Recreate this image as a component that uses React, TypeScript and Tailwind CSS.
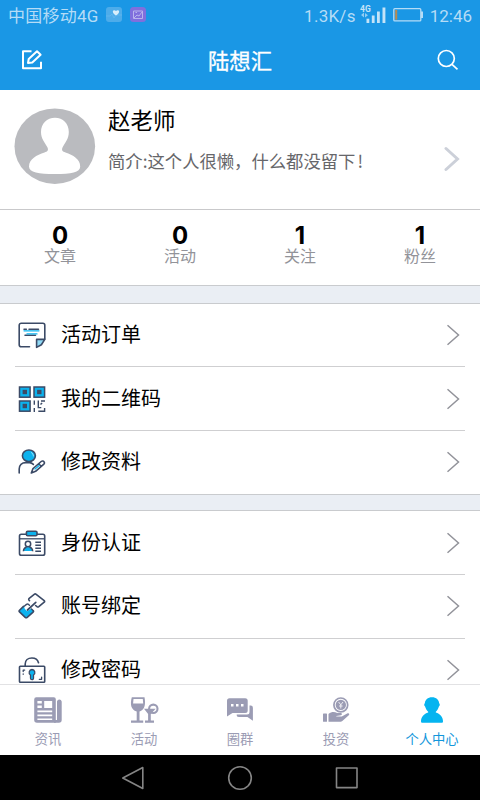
import React from "react";

const NAVY = "#3b4a66";
const CYAN = "#0cb2ee";

function OrderIcon() {
  return (
    <svg width="28" height="28" viewBox="0 0 28 28" fill="none" stroke={NAVY} strokeWidth="1.6" strokeLinecap="round" strokeLinejoin="round">
      <path d="M11.5 25.8H3.2a2 2 0 0 1-2-2V4.2a2 2 0 0 1 2-2h21.6a2 2 0 0 1 2 2V18" />
      <path d="M18.6 18.4h8.2l-3.4 5.4-4.8 2.6z" fill="#8fd9f5" />
      <path d="M6 8.3h2.4M11 8.3h9.5M7 14.2h10.5" strokeWidth="1.5" />
      <path d="M6 9.8h15M9 12.9h10" stroke={CYAN} strokeWidth="1.3" />
    </svg>
  );
}

function QrIcon() {
  return (
    <svg width="28" height="28" viewBox="0 0 28 28" fill="none" stroke={NAVY} strokeWidth="1.5">
      <rect x="1.5" y="2" width="10.6" height="10.2" fill={CYAN} />
      <rect x="16" y="2" width="10.6" height="10.2" fill={CYAN} />
      <rect x="1.5" y="16" width="10.6" height="10.2" fill={CYAN} />
      <g fill={NAVY} stroke="none">
        <rect x="4.6" y="4.8" width="4.4" height="4.4" />
        <rect x="19.1" y="4.8" width="4.4" height="4.4" />
        <rect x="4.6" y="18.8" width="4.4" height="4.4" />
      </g>
      <path d="M16.3 15.4v4.4M16.3 23v4M20.3 15.4v7.2h3M20.3 26.3h6.3v-3.2M22.5 19.5l1.6-1.6M23 16h4" strokeWidth="1.4" />
    </svg>
  );
}

function ProfileIcon() {
  return (
    <svg width="28" height="28" viewBox="0 0 28 28" fill="none" stroke={NAVY} strokeWidth="1.6" strokeLinecap="round" strokeLinejoin="round">
      <ellipse cx="10.9" cy="7.8" rx="6.5" ry="5.8" fill={CYAN} />
      <path d="M13.5 4.6c1.2.8 1.9 2 1.9 3.4" stroke="#a5e4fa" strokeWidth="1" />
      <path d="M1.2 25v-4c0-3.700 2.700-6.400 6.600-6.400h3.800c1.800 0 2.800.8 3.800 1.800" />
      <path d="M13.300 25l1.700-4.400 8.200-7.100c1-.8 2.200-.6 2.800.3.600.8.500 1.800-.4 2.600l-8 6.900zM20.800 15.800l2.400 2.700" />
      <path d="M17 21l4.200-3.600" stroke={CYAN} strokeWidth="1.300" />
    </svg>
  );
}

function IdCardIcon() {
  return (
    <svg width="28" height="28" viewBox="0 0 28 28" fill="none" stroke={NAVY} strokeWidth="1.6" strokeLinejoin="round">
      <rect x="1.5" y="5.2" width="25.2" height="21" rx="1.8" />
      <path d="M1.5 9.8h25.2" strokeWidth="1.3" />
      <rect x="8.4" y="2.2" width="10.6" height="4.6" rx="1.2" fill={CYAN} />
      <path d="M6 22c.2-2.6 1.4-4.1 4-4.1s3.900 1.500 4.100 4.100z" fill={CYAN} stroke="none" />
      <circle cx="10" cy="15" r="2.7" fill="#fff" strokeWidth="1.5" />
      <path d="M5.400 22.300c.2-2.600 1.500-3.900 3.300-4.300M11.300 18c1.900.4 3.200 1.700 3.400 4.300" strokeWidth="1.5" />
      <path d="M17.300 13.200H23M17.300 16.200H23M17.300 19.200H23M17.300 22.200H23" strokeWidth="1.400" />
    </svg>
  );
}

function LinkIcon() {
  return (
    <svg width="28" height="28" viewBox="0 0 28 28" fill="none" stroke={NAVY} strokeWidth="1.6" strokeLinecap="round" strokeLinejoin="round">
      <path d="M6 13.800L1.500 18.300q-.8.8 0 1.600l5.700 5.500q1 .8 2 0l6-5.300q.9-.9 0-1.700l-2-1.800-4 2.600-2.500-2.500z" fill={CYAN} stroke="none" />
      <path d="M5.500 14.400l-4 3.900q-.8.8 0 1.600l5.700 5.500q1 .8 2 0l5.900-5.200q.8-.8.200-1.400" />
      <path d="M11.500 8.700l-.6-.8q-.5-.8.300-1.600l5-4q1-.8 2 0l8 6.300q.8.800 0 1.600l-5.400 4.500q-.9.700-1.800 0l-1.400-1.200" />
      <path d="M9.500 18l8.300-7.600" strokeWidth="1.700" />
      <path d="M6.500 14l2-1.600q1-.8 2 0l1 .9M13.500 17l1.600 1.500" strokeWidth="1.400" />
    </svg>
  );
}

function LockIcon() {
  return (
    <svg width="28" height="28" viewBox="0 0 28 28" fill="none" stroke={NAVY} strokeWidth="1.6" strokeLinecap="round" strokeLinejoin="round">
      <path d="M7.200 10.200V8c0-3.500 2.800-6 6.700-6 3.500 0 5.900 2 6.600 4.700" />
      <rect x="1.500" y="10.200" width="25.200" height="16" rx=".8" />
      <path d="M14 13.500a3 3 0 0 1 1.500 5.500v3.200a1.500 1.500 0 0 1-3 0V19a3 3 0 0 1 1.500-5.500z" fill={CYAN} strokeWidth="1.300" />
      <path d="M5.200 15.600v-1.500h1.500M5.200 18v.3M21.300 23.300h2.300v-2.200" strokeWidth="1.300" />
    </svg>
  );
}

function Row({ icon, label, last = false }: { icon: React.ReactNode; label: string; last?: boolean }) {
  return (
    <div className="h-[63.700px] px-[15px]">
      <div className={`flex h-full items-center pl-[3px] pr-[5px] ${last ? "pb-[1px]" : "border-b border-[#cfcfd1]"}`}>
        {icon}
        <span className="ml-[15px] flex-1 pb-[2px] text-[20px] leading-[28px] text-black">{label}</span>
        <svg width="14" height="22" viewBox="0 0 14 22" fill="none" stroke="#92939a" strokeWidth="1.500">
          <path d="M1.500 1.200L12.500 11L1.500 20.800" />
        </svg>
      </div>
    </div>
  );
}

function Stat({ value, label }: { value: string; label: string }) {
  return (
    <div className="flex flex-1 flex-col items-center pt-[14px]">
      <span className="font-[Inter] text-[24px] font-bold leading-[23px] text-black">{value}</span>
      <span className="text-[16px] leading-[16px] text-[#929399]">{label}</span>
    </div>
  );
}

function Tab({ icon, label, active = false }: { icon: React.ReactNode; label: string; active?: boolean }) {
  return (
    <div className={`flex flex-1 flex-col items-center pt-[11px] ${active ? "text-[#1296db]" : "text-[#9b9cb4]"}`}>
      {icon}
      <span className="mt-[5px] text-[13.300px] leading-[20px]">{label}</span>
    </div>
  );
}

function NewsIcon() {
  return (
    <svg width="30" height="28" viewBox="0 0 30 28">
      <path fill="#9b9cb4" fillRule="evenodd" d="M3.500 1.300h17.300a2 2 0 0 1 2 2v23.500H4a2.800 2.800 0 0 1-2.800-2.800V3.500a2.200 2.200 0 0 1 2.300-2.200zM4.400 5v2.500h4.400V5zm0 4.500V12h4.400V9.500zM11.200 5v7h8V5zM4.400 14.500v1.700h14.800v-1.700zm0 4v1.700h14.800v-1.700zm0 4V24h14.800v-1.500z" />
      <path fill="#9b9cb4" d="M24 5.500a2.400 2.400 0 0 1 4.700 0V24a2.800 2.800 0 0 1-2.800 2.800H21V24h3z" />
    </svg>
  );
}

function DrinkIcon() {
  return (
    <svg width="30" height="28" viewBox="0 0 30 28" fill="#9b9cb4">
      <path fillRule="evenodd" d="M2.800 1.300h12.700c1 5.500.8 10.300-2.300 12.800-1 .9-1.900 1.200-2.700 1.300v9.200h3.700v2.200H2v-2.200h5.700v-9.200C1.900 14 .9 8.300 2.800 1.300zM4.500 3l-.4 4.500h10.100L13.800 3z" />
      <path d="M15 12.800h11.700l-4.900 5.200v6.600H25v2.200h-9v-2.200h3.100v-6.600z" />
      <circle cx="24.300" cy="12.800" r="4.200" fill="none" stroke="#9b9cb4" strokeWidth="2.100" />
    </svg>
  );
}

function ChatIcon() {
  return (
    <svg width="30" height="28" viewBox="0 0 30 28" fill="#9b9cb4">
      <path fillRule="evenodd" d="M4.500 2.200h15.700a2.500 2.500 0 0 1 2.500 2.500v9.800a2.500 2.500 0 0 1-2.500 2.500H7.500L2 20.500V4.700a2.500 2.500 0 0 1 2.500-2.500zM6 8v2.500h2.500V8zm5 0v2.500h2.500V8zm5 0v2.500h2.500V8z" />
      <path d="M24.500 9.500h1.200a2.200 2.200 0 0 1 2.200 2.200v13L22.500 21H14a2.300 2.300 0 0 1-2.300-2.500h10.300a2.500 2.500 0 0 0 2.500-2.500z" />
    </svg>
  );
}

function InvestIcon() {
  return (
    <svg width="30" height="28" viewBox="0 0 30 28" fill="#9b9cb4">
      <circle cx="19.800" cy="8.900" r="6.900" fill="none" stroke="#9b9cb4" strokeWidth="1.700" />
      <circle cx="19.800" cy="8.900" r="5.200" />
      <path d="M17.600 6l2.200 2.800L22 6M19.800 8.500v4M18 10h3.600" fill="none" stroke="#fff" strokeWidth=".8" />
      <rect x="2" y="17.500" width="4" height="8.300" rx=".6" />
      <path d="M7.500 18c3-2.400 5.800-2.400 8.700-1h3.500c1.500 0 1.800 1.900.2 2.300l-4.600.6v.6h5.500l5.400-3.100c1.600-.8 2.800.5 1.600 1.800l-6.200 5.600c-.8.700-1.500 1-2.600 1H7.500z" />
    </svg>
  );
}

function UserIcon() {
  return (
    <svg width="30" height="28" viewBox="0 0 30 28" fill="#04b4f0">
      <path d="M15 1.200c4.200 0 7.100 2.700 7.100 6 .9.400 1 2.500-.2 3.300-.6 2.300-1.700 4-3.100 5.200v.8c4.200 1.200 7.200 4.500 7.200 8.700 0 1.200-.5 1.600-1.500 1.600h-19c-1 0-1.500-.4-1.500-1.600 0-4.200 3-7.500 7.200-8.700v-.8c-1.400-1.200-2.500-2.900-3.100-5.200-1.200-.8-1.100-2.900-.2-3.300 0-3.300 2.900-6 7.100-6z" />
    </svg>
  );
}

export default function App() {
  return (
    <div className="flex h-[800px] w-[480px] flex-col overflow-hidden bg-white font-['Noto_Sans_CJK_SC',sans-serif]">
      <header className="h-[90px] shrink-0 bg-[#1a97e5]">
        <div className="flex h-[30px] items-center pl-[8px] pr-[8px] font-[Roboto,'Noto_Sans_CJK_SC',sans-serif] text-[17px] leading-[30px] text-[#b5dcf6]">
          <span className="w-[91px] whitespace-nowrap pt-[1px] tracking-[0.250px]">中国移动4G</span>
          <svg className="ml-[7px]" width="16" height="16" viewBox="0 0 16 16">
            <rect width="16" height="15" rx="3" fill="#4dacea" />
            <path d="M0 9h4l2-2 2 4 2-3h6" fill="none" stroke="#66b7ed" strokeWidth=".8" />
            <path d="M10 8.500C4 4.500 8 1.700 10 4.100 12 1.700 16 4.500 10 8.500z" fill="#d8eefb" />
          </svg>
          <svg className="ml-[8px]" width="16" height="16" viewBox="0 0 16 16">
            <rect width="16" height="15" rx="3.500" fill="#806fdd" />
            <path d="M3.500 4h9v7.500h-9zM4 11l3-3 2 1 3-4M5.500 5.500h1.500" fill="none" stroke="#b8b4ed" />
          </svg>
          <span className="ml-auto whitespace-nowrap pt-[1px] tracking-[0.250px]">1.3K/s</span>
          <svg className="ml-[4px]" width="26" height="20" viewBox="0 0 26 20" fill="#c4e3f8">
            <text x="0" y="7" fontSize="8.500" fontWeight="bold" fontFamily="Roboto">4G</text>
            <path d="M1 10l3-2.500v5zM5 8l3 2.200-3 2.300z" opacity=".7" />
            <rect x="6.500" y="13.700" width="2.800" height="4.300" />
            <rect x="11.800" y="10.500" width="2.800" height="7.500" />
            <rect x="17" y="6.500" width="2.800" height="11.500" />
            <rect x="22.500" y="2.500" width="2.900" height="15.500" />
          </svg>
          <svg className="ml-[7px]" width="31" height="16" viewBox="0 0 31 16">
            <rect x=".8" y="1.700" width="27" height="12.200" rx="1" fill="none" stroke="#b5dcf6" strokeWidth="1.300" />
            <rect x="28" y="4.500" width="2" height="6.500" fill="#b5dcf6" />
            <rect x="2.200" y="3" width="2" height="9.700" fill="#b88b51" />
          </svg>
          <span className="ml-[6px] pt-[1px]">12:46</span>
        </div>
        <div className="flex h-[60px] items-center justify-between px-[21px]">
          <svg width="22" height="22" viewBox="0 0 22 22" fill="none" stroke="#fff" strokeWidth="2" strokeLinejoin="round">
            <path d="M10.500 2.200H2v17h18v-6.500" />
            <path d="M7 14l.7-4L16 2.300l3.600 3.400L11.300 13.500z" />
          </svg>
          <h1 className="text-[21.300px] font-normal leading-[30px] text-white [-webkit-text-stroke:0.300px_white]">陆想汇</h1>
          <svg width="22" height="22" viewBox="0 0 22 22" fill="none" stroke="#fff" strokeWidth="1.700">
            <circle cx="9.300" cy="9.500" r="8" />
            <path d="M15 15.300l5.500 5" />
          </svg>
        </div>
      </header>
      <main className="min-h-0 flex-1 overflow-hidden">
        <section className="flex h-[120px] border-b border-[#c9c9cb] pl-[14px] pr-[20px] pt-[18px]">
          <svg width="82" height="77" viewBox="0 0 82 77">
            <ellipse cx="40.800" cy="38.200" rx="40.300" ry="37.700" fill="#babbbf" />
            <path d="M41 9.800c8 0 13.800 5.700 13.800 14.200 0 7-3.800 10.500-6.300 15.500-1.200 3 0 3.800 3 5 7.500 2.500 14.700 6.500 14.700 14 0 6.200-9 7.500-25.200 7.500S15 64.700 15 58.500c0-7.500 7.700-11.500 15.500-14 3-1.200 4.200-2 3-5C31 34.500 27 31 27 24c0-8.500 6-14.200 14-14.200z" fill="#fff" />
          </svg>
          <div className="ml-[12px] flex-1 whitespace-nowrap">
            <div className="-mt-[2px] text-[22.500px] leading-[26px] text-black">赵老师</div>
            <div className="mt-[16px] text-[17.330px] leading-[26px] text-[#66666a]">简介:这个人很懒，什么都没留下<span className="ml-[2px]">!</span></div>
          </div>
          <svg className="mt-[38px]" width="16" height="26" viewBox="0 0 16 26" fill="none" stroke="#ccd0d9" strokeWidth="3" strokeLinecap="round">
            <path d="M2 2.500L13.500 13L2 23.500" />
          </svg>
        </section>
        <section className="flex h-[75px]">
          <Stat value="0" label="文章" />
          <Stat value="0" label="活动" />
          <Stat value="1" label="关注" />
          <Stat value="1" label="粉丝" />
        </section>
        <div className="h-[18.500px] border-y border-[#c9cbce] bg-[#eaeef4]" />
        <Row icon={<OrderIcon />} label="活动订单" />
        <Row icon={<QrIcon />} label="我的二维码" />
        <Row icon={<ProfileIcon />} label="修改资料" last />
        <div className="-mt-[0.600px] h-[17.200px] border-y border-[#c9cbce] bg-[#eaeef4]" />
        <Row icon={<IdCardIcon />} label="身份认证" />
        <Row icon={<LinkIcon />} label="账号绑定" />
        <Row icon={<LockIcon />} label="修改密码" last />
      </main>
      <nav className="flex h-[71px] shrink-0 border-t border-[#e2e2e4] bg-white">
        <Tab icon={<NewsIcon />} label="资讯" />
        <Tab icon={<DrinkIcon />} label="活动" />
        <Tab icon={<ChatIcon />} label="圈群" />
        <Tab icon={<InvestIcon />} label="投资" />
        <Tab icon={<UserIcon />} label="个人中心" active />
      </nav>
      <footer className="flex h-[45px] shrink-0 items-center justify-center gap-[82px] bg-black">
        <svg width="24" height="24" viewBox="0 0 24 24" fill="none" stroke="#858585" strokeWidth="1.600" strokeLinejoin="round">
          <path d="M21.800 1.500v21L1.800 12z" />
        </svg>
        <svg width="26" height="26" viewBox="0 0 26 26" fill="none" stroke="#858585" strokeWidth="1.600">
          <circle cx="13" cy="13" r="11.300" />
        </svg>
        <svg width="24" height="24" viewBox="0 0 24 24" fill="none" stroke="#858585" strokeWidth="1.600" strokeLinejoin="round">
          <rect x="1.500" y="2" width="20.500" height="19.600" />
        </svg>
      </footer>
    </div>
  );
}
